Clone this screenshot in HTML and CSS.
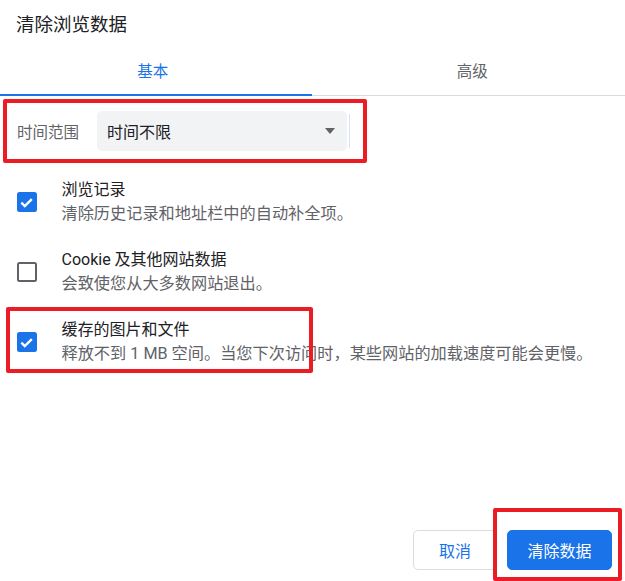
FILE: index.html
```html
<!DOCTYPE html>
<html lang="zh-CN">
<head>
<meta charset="utf-8">
<title>清除浏览数据</title>
<link rel="stylesheet" href="styles.css">
</head>
<body>
<div class="dialog">
  <div class="title">清除浏览数据</div>
  <div class="tabs">
    <div class="tab active">基本</div>
    <div class="tab">高级</div>
  </div>
  <div class="range">
    <span class="range-label">时间范围</span>
    <div class="select">
      <span class="select-text">时间不限</span>
      <span class="arrow"></span>
    </div>
    <span class="focus-line"></span>
  </div>
  <div class="items">
    <div class="item">
      <span class="checkbox checked"><svg viewBox="0 0 20 20" width="20" height="20"><path d="M4.6 10.2l3.6 3.6L15.6 6.4" fill="none" stroke="#fff" stroke-width="2.5"/></svg></span>
      <div class="item-text">
        <div class="item-title">浏览记录</div>
        <div class="item-desc">清除历史记录和地址栏中的自动补全项。</div>
      </div>
    </div>
    <div class="item">
      <span class="checkbox"></span>
      <div class="item-text">
        <div class="item-title">Cookie 及其他网站数据</div>
        <div class="item-desc">会致使您从大多数网站退出。</div>
      </div>
    </div>
    <div class="item">
      <span class="checkbox checked"><svg viewBox="0 0 20 20" width="20" height="20"><path d="M4.6 10.2l3.6 3.6L15.6 6.4" fill="none" stroke="#fff" stroke-width="2.5"/></svg></span>
      <div class="item-text">
        <div class="item-title">缓存的图片和文件</div>
        <div class="item-desc">释放不到 1 MB 空间。当您下次访问时，某些网站的加载速度可能会更慢。</div>
      </div>
    </div>
  </div>
  <div class="footer">
    <button class="btn btn-cancel">取消</button>
    <button class="btn btn-primary">清除数据</button>
  </div>
  <div class="mark mark-range"></div>
  <div class="mark mark-cache"></div>
  <div class="mark mark-button"></div>
</div>
</body>
</html>
```

FILE: styles.css
```css
* { box-sizing: border-box; }
html, body { margin: 0; padding: 0; background: #fff; }
body {
  font-family: Roboto, "Noto Sans CJK SC", sans-serif;
  color: #202124;
}
.dialog {
  position: relative;
  width: 625px;
  height: 581px;
  display: flex;
  flex-direction: column;
  overflow: hidden;
}
.title {
  padding: 13px 0 0 16px;
  font-size: 18.5px;
  line-height: 24px;
  color: #202124;
}
.tabs {
  margin-top: 8px;
  display: flex;
  border-bottom: 1px solid #dadce0;
}
.tab {
  position: relative;
  flex: 1;
  height: 50px;
  display: flex;
  align-items: center;
  justify-content: center;
  font-size: 15.5px;
  color: #5f6368;
  padding-right: 6px;
}
.tab + .tab { padding-right: 0; padding-left: 8px; }
.tab.active { color: #1a73e8; }
.tab.active::after {
  content: "";
  position: absolute;
  left: 0;
  right: 0;
  bottom: -1px;
  height: 2px;
  background: #1a73e8;
}
.range {
  margin-top: 15px;
  padding-left: 17px;
  display: flex;
  align-items: center;
}
.range-label {
  width: 80px;
  font-size: 15.5px;
  color: #5f6368;
}
.select {
  width: 250px;
  height: 40px;
  background: #f1f3f4;
  border-radius: 5px;
  display: flex;
  align-items: center;
  justify-content: space-between;
  padding: 0 12px 0 10px;
}
.select-text { font-size: 16px; color: #202124; }
.arrow {
  width: 0;
  height: 0;
  border-left: 5.5px solid transparent;
  border-right: 5.5px solid transparent;
  border-top: 6px solid #5f6368;
}
.focus-line {
  margin-left: 2px;
  width: 1px;
  height: 34px;
  background: #d2e3fc;
}
.items {
  margin-top: 27px;
  display: flex;
  flex-direction: column;
  gap: 22px;
}
.item {
  display: flex;
  align-items: center;
  padding-left: 17px;
}
.checkbox {
  width: 19.5px;
  height: 19.5px;
  border: 2px solid #5f6368;
  border-radius: 2.5px;
  flex: none;
  margin-right: 25px;
  display: flex;
  align-items: center;
  justify-content: center;
}
.checkbox.checked {
  background: #1a73e8;
  border-color: #1a73e8;
}
.checkbox svg { width: 19px; height: 19px; flex: none; }
.item-text { line-height: 24px; }
.item-title { font-size: 16px; color: #202124; }
.item-desc { font-size: 16.2px; color: #5f6368; }
.footer {
  margin-top: auto;
  display: flex;
  justify-content: flex-end;
  gap: 10px;
  padding: 0 13px 11px 0;
}
.btn {
  height: 40px;
  border-radius: 5px;
  font-family: Roboto, "Noto Sans CJK SC", sans-serif;
  font-size: 16px;
  padding: 0;
  cursor: pointer;
}
.btn-cancel {
  width: 84px;
  background: #fff;
  border: 1px solid #dadce0;
  color: #1a73e8;
}
.btn-primary {
  width: 105px;
  background: #1a73e8;
  border: 1px solid #1a73e8;
  color: #fff;
}
.mark {
  position: absolute;
  border: 4px solid #ec1c24;
  border-radius: 2px;
  pointer-events: none;
}
.mark-range { left: 3px; top: 99px; width: 364px; height: 64px; }
.mark-cache { left: 6px; top: 307px; width: 307px; height: 66px; }
.mark-button { left: 493px; top: 508px; width: 129px; height: 73px; }
```
